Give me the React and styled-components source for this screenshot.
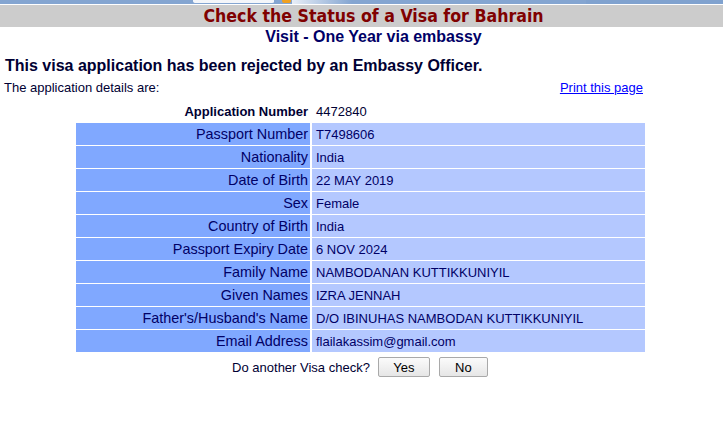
import styled, { createGlobalStyle } from "styled-components";

const GlobalStyle = createGlobalStyle`
  body {
    margin: 0;
    background: #ffffff;
    font-family: "Liberation Sans", Arial, sans-serif;
  }
`

const Page = styled.div`
  width: 723px;
  min-height: 428px;
  display: flex;
  flex-direction: column;
`

const Banner = styled.div`
  height: 4px;
  border-bottom: 1px solid #ffffff;
  background: #84a5d1;
  overflow: hidden;
  display: flex;
`

const TitleBand = styled.div`
  height: 22px;
  padding-left: 24px;
  background: #cccccc;
  display: flex;
  align-items: center;
  justify-content: center;
`

const Title = styled.h1`
  margin: 0;
  font-family: "DejaVu Sans Condensed", "DejaVu Sans", sans-serif;
  font-stretch: condensed;
  font-weight: bold;
  font-size: 17.6px;
  color: #800000;
`

const SubTitle = styled.h2`
  margin: 0;
  padding-left: 24px;
  height: 19px;
  line-height: 19px;
  text-align: center;
  font-size: 16px;
  font-weight: bold;
  color: #000066;
`

const Headline = styled.h3`
  margin: 11px 0 0 5px;
  font-size: 16px;
  line-height: 18px;
  font-weight: bold;
  color: #000033;
`

const DetailsRow = styled.div`
  width: 643px;
  margin-top: 5px;
  display: flex;
  justify-content: space-between;
  align-items: center;
  padding-left: 4px;
  box-sizing: border-box;
  font-size: 13px;
  line-height: 16px;
  color: #000033;
`

const PrintLink = styled.a`
  color: #0000ff;
  text-decoration: underline;
  font-size: 13px;
  cursor: pointer;
`

const Table = styled.table`
  width: 573px;
  margin: 3px 0 0 74px;
  border-collapse: separate;
  border-spacing: 2px 1px;
`

const Label = styled.td`
  width: 232px;
  height: 22px;
  padding: 0 2px 0 0;
  text-align: right;
  font-size: ${(p) => (p.$head ? "13px" : "14.4px")};
  font-weight: ${(p) => (p.$head ? "bold" : "normal")};
  color: ${(p) => (p.$head ? "#000033" : "#000066")};
  background: ${(p) => (p.$head ? "transparent" : "#80a8ff")};
`

const Value = styled.td`
  height: 22px;
  padding: 0 0 0 4px;
  font-size: 13px;
  color: ${(p) => (p.$head ? "#000033" : "#000066")};
  background: ${(p) => (p.$head ? "transparent" : "#b4c8ff")};
`

const Actions = styled.div`
  margin-top: 4px;
  padding-right: 3px;
  display: flex;
  justify-content: center;
  align-items: center;
  gap: 9px;
  font-size: 13px;
  color: #000033;
`

const Question = styled.span`
  margin-right: -1px;
`

const Button = styled.button`
  width: ${(p) => p.$w}px;
  height: 20px;
  padding: 0;
  font-family: "Liberation Sans", Arial, sans-serif;
  font-size: 13px;
  color: #000000;
  background: linear-gradient(#fbfbfb, #e6e6e6);
  border: 1px solid #a9a9a9;
  border-radius: 2px;
`

function BannerArt() {
  return (
    <svg width="723" height="4" viewBox="0 0 723 4">
      <defs>
        <linearGradient id="glow" x1="0" x2="1">
          <stop offset="0" stopColor="#e8eef7" />
          <stop offset="1" stopColor="#84a5d1" />
        </linearGradient>
      </defs>
      <rect x="0" y="0" width="723" height="4" fill="#84a5d1" />
      <rect x="586" y="0" width="137" height="4" fill="#80a2cf" />
      <rect x="292" y="0" width="60" height="4" fill="url(#glow)" />
      <path d="M193 0 H274 V2 Q274 3 272 3 H196 Q193 3 193 1 Z" fill="#f4f6fa" />
      <path d="M282 0 H291 V1 Q291 3 288 3 H284 Q282 3 282 1 Z" fill="#f0a020" />
    </svg>
  )
}

const rows = [
  ["Passport Number", "T7498606"],
  ["Nationality", "India"],
  ["Date of Birth", "22 MAY 2019"],
  ["Sex", "Female"],
  ["Country of Birth", "India"],
  ["Passport Expiry Date", "6 NOV 2024"],
  ["Family Name", "NAMBODANAN KUTTIKKUNIYIL"],
  ["Given Names", "IZRA JENNAH"],
  ["Father's/Husband's Name", "D/O IBINUHAS NAMBODAN KUTTIKKUNIYIL"],
  ["Email Address", "flailakassim@gmail.com"],
]

export default function App() {
  return (
    <Page>
      <GlobalStyle />
      <Banner>
        <BannerArt />
      </Banner>
      <TitleBand>
        <Title>Check the Status of a Visa for Bahrain</Title>
      </TitleBand>
      <SubTitle>Visit - One Year via embassy</SubTitle>
      <Headline>This visa application has been rejected by an Embassy Officer.</Headline>
      <DetailsRow>
        <span>The application details are:</span>
        <PrintLink>Print this page</PrintLink>
      </DetailsRow>
      <Table>
        <tbody>
          <tr>
            <Label $head>Application Number</Label>
            <Value $head>4472840</Value>
          </tr>
          {rows.map(([label, value]) => (
            <tr key={label}>
              <Label>{label}</Label>
              <Value>{value}</Value>
            </tr>
          ))}
        </tbody>
      </Table>
      <Actions>
        <Question>Do another Visa check?</Question>
        <Button $w={52}>Yes</Button>
        <Button $w={49}>No</Button>
      </Actions>
    </Page>
  )
}
